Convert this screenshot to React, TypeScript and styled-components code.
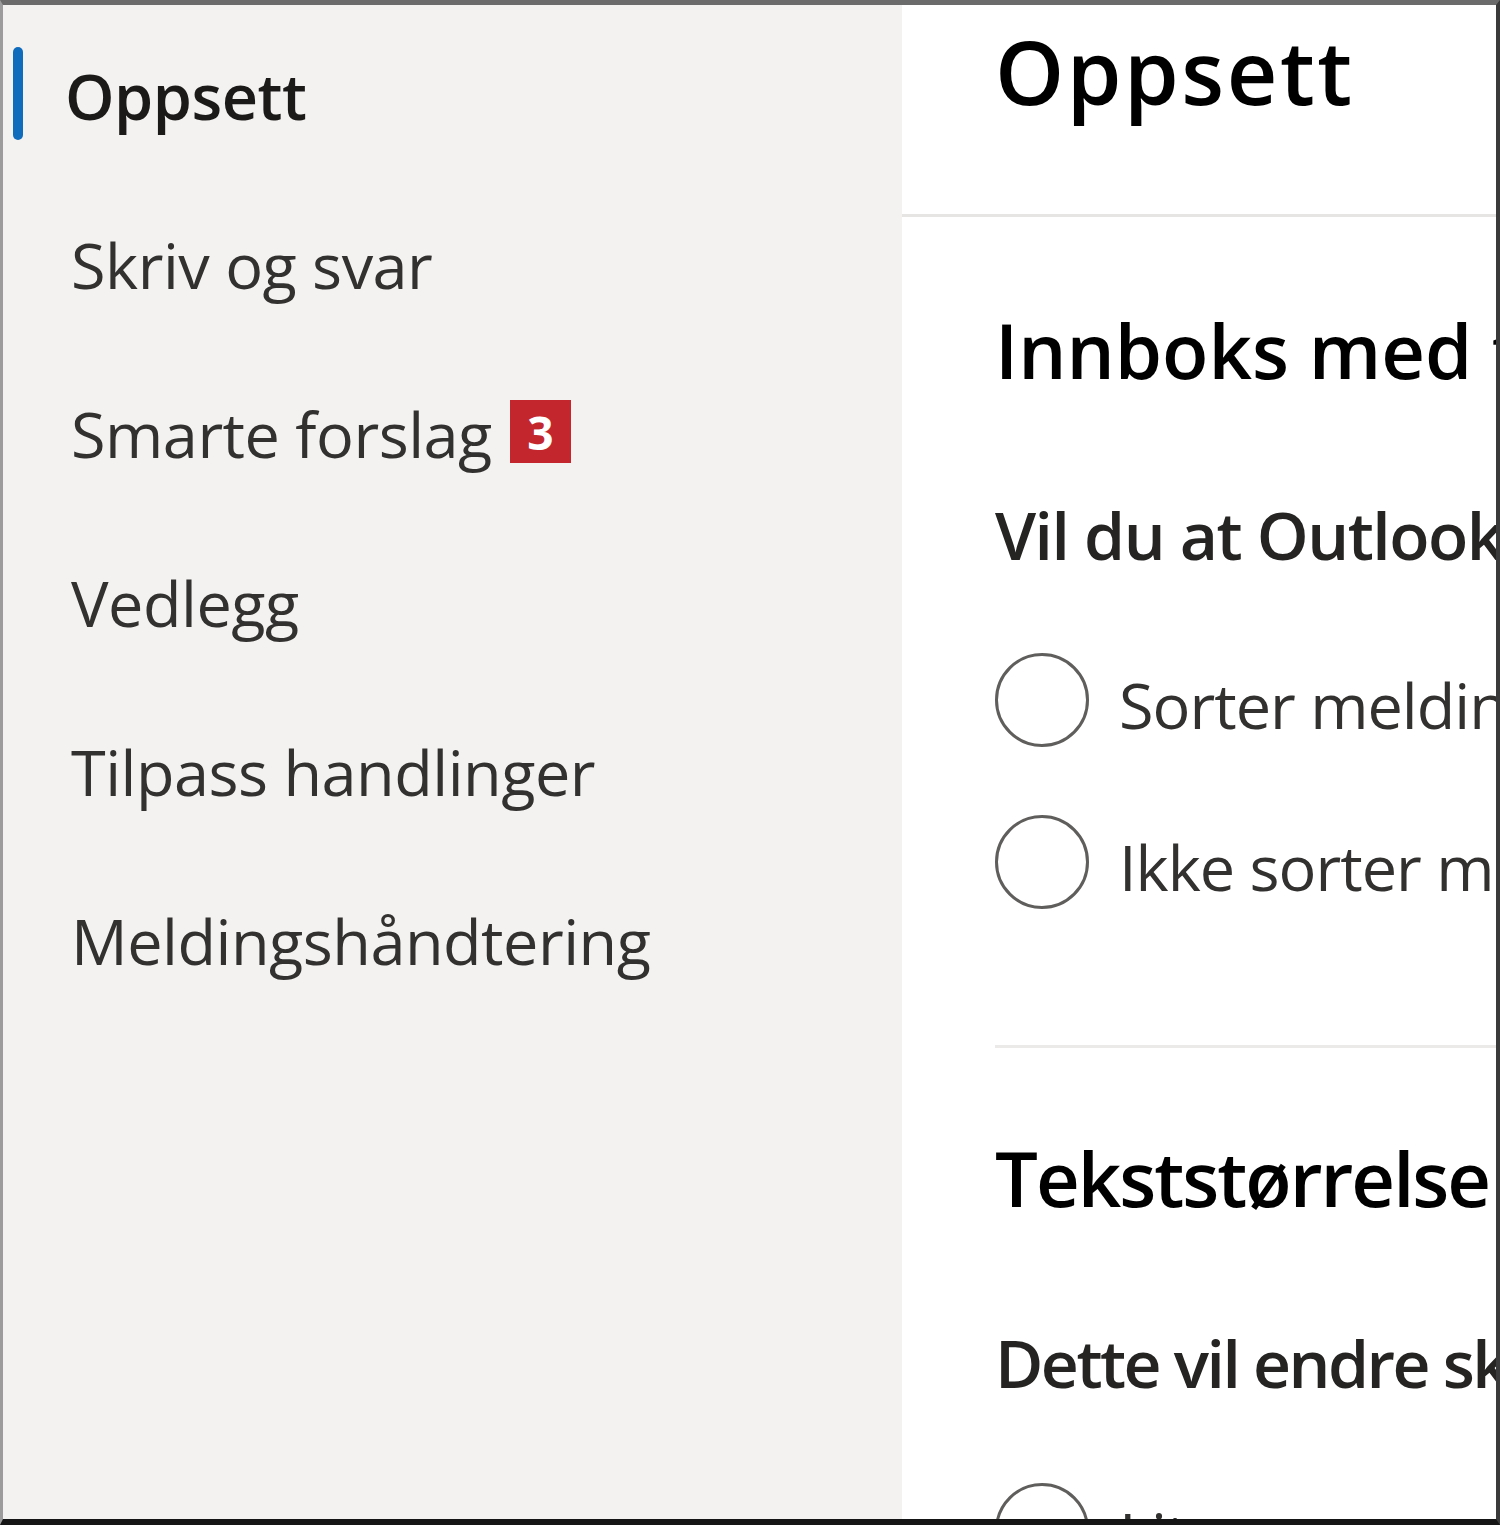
import React from "react";
import styled, { createGlobalStyle } from "styled-components";

const GlobalStyle = createGlobalStyle`
  html, body {
    margin: 0;
    padding: 0;
    background: #ffffff;
  }
  * { box-sizing: border-box; }
`;

const Frame = styled.div`
  width: 1500px;
  height: 1525px;
  display: grid;
  grid-template-columns: 899px 1fr;
  border-top: 5px solid #6b6b6b;
  border-left: 3px solid #9c9c9c;
  border-right: 4px solid #3a3a3a;
  border-bottom: 6px solid #151515;
  overflow: hidden;
  font-family: "Open Sans", "Noto Sans", sans-serif;
`;

const Sidebar = styled.nav`
  background: #f3f2f1;
  padding-top: 6px;
  display: flex;
  flex-direction: column;
`;

const NavItem = styled.div<{ $active?: boolean }>`
  position: relative;
  flex: none;
  height: 169px;
  display: flex;
  align-items: center;
  gap: 18px;
  padding-left: ${(p) => (p.$active ? 62 : 68)}px;
  font-size: 63px;
  line-height: 1;
  letter-spacing: -0.5px;
  font-weight: ${(p) => (p.$active ? 600 : 400)};
  color: ${(p) => (p.$active ? "#1b1a19" : "#323130")};

  &::before {
    content: "";
    display: ${(p) => (p.$active ? "block" : "none")};
    position: absolute;
    left: 10px;
    top: 36px;
    width: 10px;
    height: 93px;
    border-radius: 5px;
    background: #0f6cbd;
  }
`;

const Badge = styled.span`
  display: inline-flex;
  align-items: center;
  justify-content: center;
  width: 61px;
  height: 63px;
  background: #c4262e;
  color: #ffffff;
  font-size: 46px;
  font-weight: 700;
  letter-spacing: 0;
  margin-top: -4px;
`;

const Main = styled.main`
  background: #ffffff;
  display: flex;
  flex-direction: column;
  overflow: hidden;
  white-space: nowrap;
  min-height: 0;
`;

const Header = styled.header`
  flex: none;
  height: 212px;
  padding: 22px 0 0 93px;
  border-bottom: 3px solid #e6e5e3;
`;

const PageTitle = styled.h1`
  margin: 0;
  font-size: 88px;
  line-height: 1;
  font-weight: 600;
  letter-spacing: 2.5px;
  color: #000000;
`;

const Content = styled.div`
  flex: none;
  padding-left: 93px;
  display: flex;
  flex-direction: column;
`;

const SectionTitle = styled.h2<{ $gap: number; $spacing: number }>`
  flex: none;
  margin: ${(p) => p.$gap}px 0 0;
  font-size: 76px;
  line-height: 1;
  font-weight: 600;
  letter-spacing: ${(p) => p.$spacing}px;
  color: #000000;
`;

const Question = styled.p<{ $gap: number; $spacing: number }>`
  flex: none;
  margin: ${(p) => p.$gap}px 0 0;
  font-size: 66px;
  line-height: 1;
  font-weight: 600;
  letter-spacing: ${(p) => p.$spacing}px;
  color: #252423;
`;

const RadioRow = styled.label<{ $gap: number }>`
  flex: none;
  margin-top: ${(p) => p.$gap}px;
  display: flex;
  align-items: center;
  gap: 30px;
  height: 94px;
  font-size: 63px;
  line-height: 1;
  letter-spacing: -1px;
  color: #323130;
`;

const RadioCircle = styled.span`
  flex: none;
  width: 94px;
  height: 94px;
  border-radius: 50%;
  border: 3px solid #605e5c;
  background: #ffffff;
`;

const RadioText = styled.span`
  padding-top: 8px;
`;

const Divider = styled.hr<{ $gap: number }>`
  flex: none;
  margin: ${(p) => p.$gap}px 0 0;
  border: none;
  border-top: 3px solid #eceae8;
  width: 100%;
`;

const navItems = [
  { label: "Oppsett", active: true },
  { label: "Skriv og svar" },
  { label: "Smarte forslag", badge: 3 },
  { label: "Vedlegg" },
  { label: "Tilpass handlinger" },
  { label: "Meldingshåndtering" },
];

export default function App() {
  return (
    <>
      <GlobalStyle />
      <Frame>
        <Sidebar>
          {navItems.map((item) => (
            <NavItem key={item.label} $active={item.active}>
              <span>{item.label}</span>
              {item.badge !== undefined && <Badge>{item.badge}</Badge>}
            </NavItem>
          ))}
        </Sidebar>
        <Main>
          <Header>
            <PageTitle>Oppsett</PageTitle>
          </Header>
          <Content>
            <SectionTitle $gap={95} $spacing={0}>
              Innboks med fokus
            </SectionTitle>
            <Question $gap={113} $spacing={-1.5}>
              Vil du at Outlook skal sortere meldingene dine?
            </Question>
            <RadioRow $gap={86}>
              <RadioCircle />
              <RadioText>Sorter meldinger i Fokusert og Annet</RadioText>
            </RadioRow>
            <RadioRow $gap={68}>
              <RadioCircle />
              <RadioText>Ikke sorter meldingene mine</RadioText>
            </RadioRow>
            <Divider $gap={136} />
            <SectionTitle $gap={92} $spacing={-2}>
              Tekststørrelse
            </SectionTitle>
            <Question $gap={113} $spacing={-2.5}>
              Dette vil endre skriftstørrelsen i innboksen og lesepanelet.
            </Question>
            <RadioRow $gap={88}>
              <RadioCircle />
              <RadioText>Liten</RadioText>
            </RadioRow>
          </Content>
        </Main>
      </Frame>
    </>
  );
}
